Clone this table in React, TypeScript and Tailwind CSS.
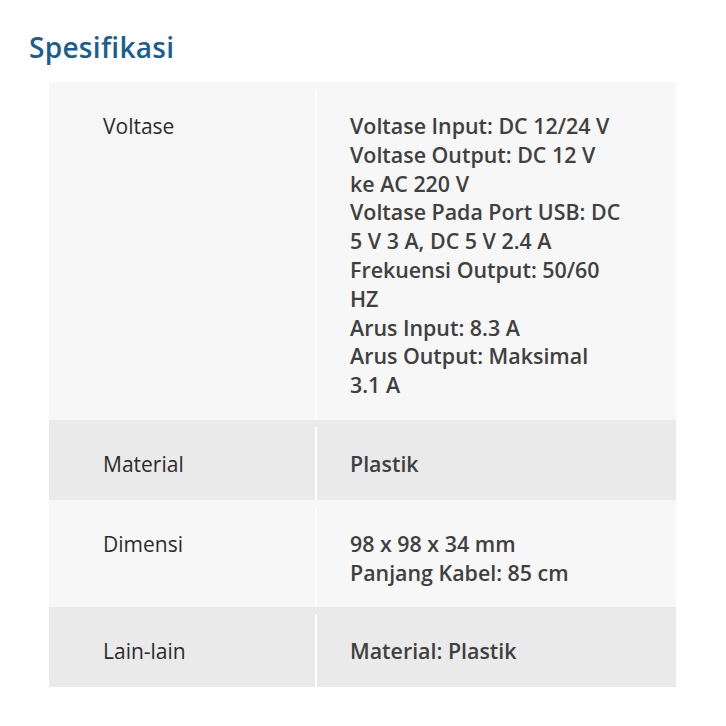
const ROWS = [
  {
    label: 'Voltase',
    lines: [
      'Voltase Input: DC 12/24 V',
      'Voltase Output: DC 12 V ke AC 220 V',
      'Voltase Pada Port USB: DC 5 V 3 A, DC 5 V 2.4 A',
      'Frekuensi Output: 50/60 HZ',
      'Arus Input: 8.3 A',
      'Arus Output: Maksimal 3.1 A',
    ],
  },
  { label: 'Material', lines: ['Plastik'] },
  { label: 'Dimensi', lines: ['98 x 98 x 34 mm', 'Panjang Kabel: 85 cm'] },
  { label: 'Lain-lain', lines: ['Material: Plastik'] },
]

export default function App() {
  return (
    <div className="w-[726px] h-[726px] bg-white font-['Open_Sans',sans-serif]">
      <h2 className="pl-[29px] pt-[29px] text-[28px] leading-[36px] tracking-[0.3px] font-semibold text-[#1b5d8c]">
        Spesifikasi
      </h2>

      <div className="mt-[17px] ml-[49px] w-[627px]">
        {ROWS.map((row, i) => (
          <div
            key={row.label}
            className={`flex ${i % 2 === 0 ? 'bg-[#f7f7f7]' : 'bg-[#eaeaea]'}`}
          >
            <div className="w-[266px] shrink-0 pl-[54px] pt-[30px] pb-[21px] text-[21px] leading-[28.8px] text-[#2b2b2b]">
              {row.label}
            </div>
            <div className="mt-[7px] flex-1 border-l-2 border-white pl-[33px] pr-[54px] pt-[23px] pb-[20px] text-[21.4px] leading-[28.8px] font-semibold text-[#404040]">
              {row.lines.map(l => (
                <div key={l}>{l}</div>
              ))}
            </div>
          </div>
        ))}
      </div>
    </div>
  )
}
